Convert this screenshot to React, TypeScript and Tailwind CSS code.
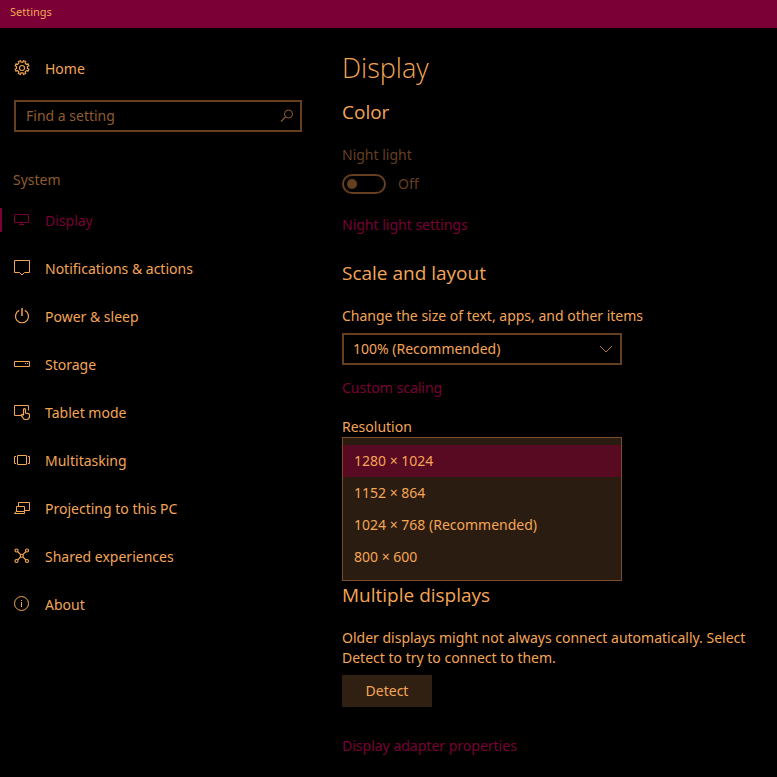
import React, { useState } from 'react';

const Svg: React.FC<{ children: React.ReactNode }> = ({ children }) => (
  <svg width="16" height="16" viewBox="0 0 16 16" fill="none" stroke="currentColor" strokeWidth="1" className="shrink-0" aria-hidden="true">
    {children}
  </svg>
);

const GearIcon = () => (
  <Svg>
    <path d="M6.500 .6l.5 1.500h2l.5-1.500 2.200.9-.7 1.500 1.500 1.500 1.500-.7.9 2.200-1.500.5v2l1.500.5-.9 2.200-1.500-.7-1.500 1.500.7 1.500-2.200.9-.5-1.500H7l-.5 1.500-2.200-.9.7-1.500L3.500 10.500l-1.500.7L1.100 9l1.500-.5v-2L1.100 6 2 3.800l1.500.7L5 3l-.7-1.500z" strokeWidth="1.100" />
    <circle cx="8" cy="8" r="2.500" strokeWidth="1.100" />
  </Svg>
);

const DisplayIcon = () => (
  <Svg>
    <path d="M.5 2.500h14v8H.5zM7.500 10.500v2M5 12.500h5" />
  </Svg>
);

const NotificationIcon = () => (
  <Svg>
    <path d="M.5 .5h15v12h-5L8 15l-2.500-2.500h-5z" />
  </Svg>
);

const PowerIcon = () => (
  <Svg>
    <path d="M8 0v8" strokeWidth="1.500" />
    <path d="M5.200 2.400a6.500 6.500 0 1 0 5.600 0" strokeWidth="1.200" />
  </Svg>
);

const StorageIcon = () => (
  <Svg>
    <path d="M.5 5.500h15v5H.5z" />
    <path d="M11 7.500h1M13 7.500h1" />
  </Svg>
);

const TabletIcon = () => (
  <Svg>
    <path d="M7 11.500H.5V1.500h14v5" />
    <path d="M9.500 11V5.500c0-1.300 2-1.300 2 0V9l3 .7c.7.200 1 .6 1 1.300v1.500c0 2-1 3-3 3h-1c-1.200 0-1.800-.4-2.300-1.300L7.400 11.700c-.4-1 .9-1.600 1.500-.9l.6.8" strokeWidth="1.200" />
  </Svg>
);

const MultitaskIcon = () => (
  <Svg>
    <path d="M3.500 3.500h9v9h-9zM2 4.500H.5v7H2M14 4.500h1.500v7H14" />
  </Svg>
);

const ProjectIcon = () => (
  <Svg>
    <path d="M4.500 6V2.500h11v8H11M2.500 11.500v-5h8v5M.5 13.500l1.500-2h8.500v2z" />
  </Svg>
);

const SharedIcon = () => (
  <Svg>
    <g strokeWidth="1.200">
      <circle cx="2.500" cy="2.500" r="1.500" />
      <circle cx="13" cy="2.500" r="1.500" />
      <circle cx="2.500" cy="13" r="1.500" />
      <circle cx="13" cy="13" r="1.500" />
      <circle cx="7.750" cy="7.750" r="1.500" />
      <path d="M3.500 3.500l3.200 3.200M12 3.500L8.800 6.700M3.500 12l3.200-3.200M12 12L8.800 8.800" />
    </g>
  </Svg>
);

const AboutIcon = () => (
  <Svg>
    <circle cx="7.500" cy="7.500" r="7" />
    <path d="M7.500 6v5M7.500 4v1" />
  </Svg>
);

const navItems = [
  { label: 'Display', icon: DisplayIcon },
  { label: 'Notifications & actions', icon: NotificationIcon },
  { label: 'Power & sleep', icon: PowerIcon },
  { label: 'Storage', icon: StorageIcon },
  { label: 'Tablet mode', icon: TabletIcon },
  { label: 'Multitasking', icon: MultitaskIcon },
  { label: 'Projecting to this PC', icon: ProjectIcon },
  { label: 'Shared experiences', icon: SharedIcon },
  { label: 'About', icon: AboutIcon },
];

const resolutions = ['1280 × 1024', '1152 × 864', '1024 × 768 (Recommended)', '800 × 600'];

const Sidebar = () => (
  <aside className="w-[316px] shrink-0 pt-4">
    <a href="#home" className="flex h-12 items-center gap-[15px] pl-[14px]">
      <GearIcon />
      <span className="pt-[2px]">Home</span>
    </a>
    <div className="relative mt-2 ml-[14px] mr-[14px]">
      <input
        type="search"
        aria-label="Find a setting"
        placeholder="Find a setting"
        className="block h-8 w-full border-2 border-[#663f20] bg-black pr-8 pb-[2px] pl-[10px] outline-none placeholder:text-[#8f5c2e]"
      />
      <svg width="14" height="14" viewBox="0 0 14 14" fill="none" stroke="#8f5c2e" className="pointer-events-none absolute top-[9px] right-2" aria-hidden="true">
        <circle cx="8.500" cy="5" r="4" />
        <path d="M5.600 7.800L1 12.500" strokeWidth="1.200" />
      </svg>
    </div>
    <h2 className="mt-9 mb-1 pl-[13px] leading-6 text-[#8f5c2e]">System</h2>
    <nav>
      {navItems.map(({ label, icon: Icon }, i) => (
        <a
          key={label}
          href="#"
          aria-current={i === 0 ? 'page' : undefined}
          className={`flex h-12 items-center ${i === 0 ? 'text-[#7a0035]' : ''}`}
        >
          <span className={`h-6 w-[2px] ${i === 0 ? 'bg-[#7a0035]' : ''}`} />
          <span className="flex items-center gap-[15px] pl-3">
            <Icon />
            <span className="pt-[2px]">{label}</span>
          </span>
        </a>
      ))}
    </nav>
  </aside>
);

const SectionTitle: React.FC<{ children: React.ReactNode }> = ({ children }) => (
  <h2 className="font-['Open_Sans',sans-serif] text-[19px] leading-7">{children}</h2>
);

const App: React.FC = () => {
  const [resolution, setResolution] = useState(resolutions[0]);

  return (
    <div className="min-h-screen bg-black font-['Noto_Sans',sans-serif] text-[14px] leading-5 text-[#f4a556]">
      <header className="flex h-7 items-center bg-[#7a0035] px-[10px] pb-1 text-[11px]">Settings</header>

      <div className="flex">
        <Sidebar />

        <main className="min-w-0 flex-1 pt-5 pr-5 pl-[26px]">
          <h1 className="font-['Open_Sans',sans-serif] text-[27px] leading-10 font-light">Display</h1>

          <section className="mt-[10px]">
            <SectionTitle>Color</SectionTitle>
            <div className="mt-[19px] text-[#663f20]">
              <label htmlFor="night-light" className="block">Night light</label>
              <div className="mt-[9px] flex items-center gap-3">
                <input
                  id="night-light"
                  type="checkbox"
                  role="switch"
                  disabled
                  className="flex h-5 w-11 appearance-none items-center rounded-full border-2 border-[#663f20] px-[3px] before:size-[10px] before:rounded-full before:bg-[#663f20] before:content-['']"
                />
                <span>Off</span>
              </div>
            </div>
            <a href="#night-light" className="mt-[21px] block text-[#7a0035]">Night light settings</a>
          </section>

          <section className="mt-6">
            <SectionTitle>Scale and layout</SectionTitle>
            <label htmlFor="scale" className="mt-[19px] block">Change the size of text, apps, and other items</label>
            <div className="relative mt-[7px] max-w-[280px]">
              <select id="scale" className="block h-8 w-full appearance-none border-2 border-[#663f20] bg-black pl-[9px] outline-none">
                <option>100% (Recommended)</option>
                <option>125%</option>
              </select>
              <svg width="14" height="8" viewBox="0 0 14 8" fill="none" stroke="#b0753c" className="pointer-events-none absolute top-3 right-[9px]" aria-hidden="true">
                <path d="M1 1l6 6 6-6" />
              </svg>
            </div>
            <a href="#custom-scaling" className="mt-[13px] block text-[#7a0035]">Custom scaling</a>

            <div id="resolution-label" className="mt-[19px]">Resolution</div>
            <div role="listbox" aria-labelledby="resolution-label" className="max-w-[280px] border border-[#7a4d28] bg-[#2a1c10] py-[7px]">
              {resolutions.map(r => (
                <button
                  key={r}
                  type="button"
                  role="option"
                  aria-selected={r === resolution}
                  onClick={() => setResolution(r)}
                  className={`block h-8 w-full px-[11px] text-left ${r === resolution ? 'bg-[#580a22]' : ''}`}
                >
                  {r}
                </button>
              ))}
            </div>
          </section>

          <section>
            <SectionTitle>Multiple displays</SectionTitle>
            <p className="mt-[19px]">Older displays might not always connect automatically. Select Detect to try to connect to them.</p>
            <button type="button" className="mt-[7px] block h-8 w-[90px] bg-[#302012]">Detect</button>
            <a href="#adapter" className="mt-[29px] block text-[#7a0035]">Display adapter properties</a>
          </section>
        </main>
      </div>
    </div>
  );
};

export default App;
